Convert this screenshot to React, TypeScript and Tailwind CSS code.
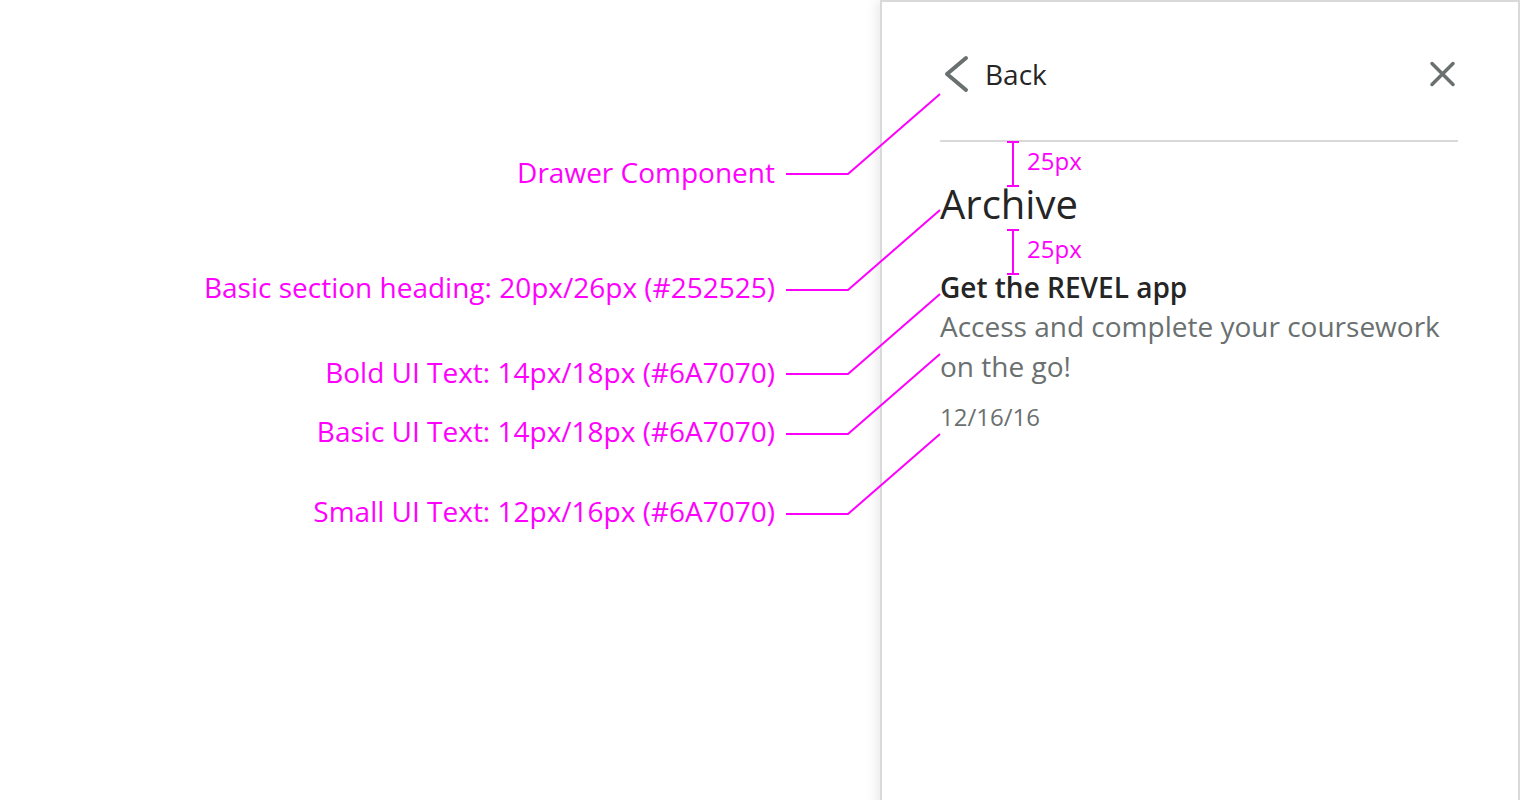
const labelCls = "h-[36px] leading-[36px] whitespace-nowrap";

const connectors = [
  { y: 174, to: 94 },
  { y: 290, to: 210 },
  { y: 374, to: 294 },
  { y: 434, to: 354 },
  { y: 514, to: 434 },
];

function Annotations() {
  return (
    <div className="absolute inset-0 pointer-events-none">
      <svg width="1520" height="800" className="absolute inset-0">
        {connectors.map((c) => (
          <polyline
            key={c.y}
            points={`786,${c.y} 848,${c.y} 940,${c.to}`}
            fill="none"
            stroke="#ff00ff"
            strokeWidth="2"
          />
        ))}
        {/* spacing markers */}
        <g stroke="#ff00ff" strokeWidth="2">
          <line x1="1013" y1="141" x2="1013" y2="186" />
          <line x1="1007" y1="142" x2="1019" y2="142" />
          <line x1="1007" y1="186" x2="1019" y2="186" />
          <line x1="1013" y1="229" x2="1013" y2="274" />
          <line x1="1007" y1="230" x2="1019" y2="230" />
          <line x1="1007" y1="274" x2="1019" y2="274" />
        </g>
      </svg>
      <span className="absolute left-[1027px] top-[145px] text-[24px] leading-[32px] text-[#ff00ff]">
        25px
      </span>
      <span className="absolute left-[1027px] top-[233px] text-[24px] leading-[32px] text-[#ff00ff]">
        25px
      </span>
    </div>
  );
}

export default function App() {
  return (
    <div className="relative w-[1520px] h-[800px] overflow-hidden bg-white flex font-['Open_Sans',sans-serif]">
      {/* ── Labels ── */}
      <div className="w-[880px] shrink-0 flex flex-col items-end pr-[105px] text-[28px] text-[#ff00ff]">
        <div className={`${labelCls} mt-[154px]`}>Drawer Component</div>
        <div className={`${labelCls} mt-[79px]`}>
          Basic section heading: 20px/26px (#252525)
        </div>
        <div className={`${labelCls} mt-[49px]`}>
          Bold UI Text: 14px/18px (#6A7070)
        </div>
        <div className={`${labelCls} mt-[23px]`}>
          Basic UI Text: 14px/18px (#6A7070)
        </div>
        <div className={`${labelCls} mt-[44px]`}>
          Small UI Text: 12px/16px (#6A7070)
        </div>
      </div>

      {/* ── Drawer ── */}
      <div className="w-[640px] h-[820px] shrink-0 border-2 border-[#d9d9d9] bg-white shadow-[-4px_0_10px_rgba(0,0,0,0.08)] pl-[58px] pr-[60px] pt-[53px] flex flex-col">
        <div className="h-[38px] flex items-center justify-between">
          <button className="flex items-center gap-[15px] text-[28px] leading-[36px] font-medium text-[#252525]">
            <svg width="30" height="38" viewBox="0 0 30 38" fill="none">
              <path
                d="M26 3 L7 19 L26 35"
                stroke="#6a7070"
                strokeWidth="4"
                strokeLinecap="round"
                strokeLinejoin="round"
              />
            </svg>
            Back
          </button>
          <svg width="30" height="30" viewBox="0 0 30 30" fill="none">
            <path
              d="M4 4.5 L25 25.5 M25 4.5 L4 25.5"
              stroke="#6a7070"
              strokeWidth="3.5"
              strokeLinecap="round"
            />
          </svg>
        </div>

        <div className="h-[2px] bg-[#d9d9d9] mt-[47px]" />

        <h2 className="mt-[36px] text-[40px] leading-[52px] text-[#252525]">
          Archive
        </h2>
        <p className="mt-[38px] text-[28px] leading-[38px] font-semibold text-[#252525]">
          Get the REVEL app
        </p>
        <p className="text-[28px] leading-[40px] text-[#6a7070]">
          Access and complete your coursework on the go!
        </p>
        <p className="mt-[15px] text-[24px] leading-[32px] text-[#6a7070]">
          12/16/16
        </p>
      </div>

      <Annotations />
    </div>
  );
}
